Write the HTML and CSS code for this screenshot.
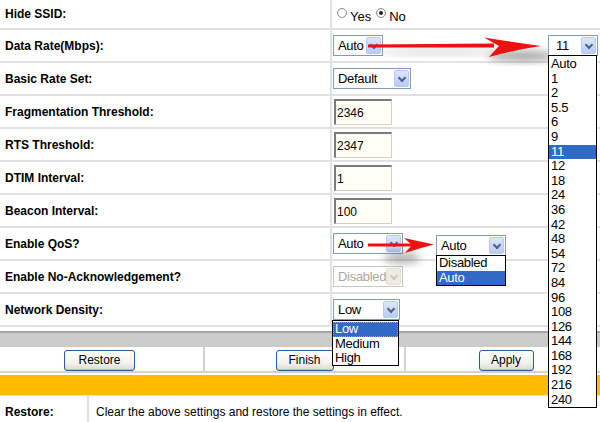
FILE: index.html
```html
<!DOCTYPE html>
<html>
<head>
<meta charset="utf-8">
<link rel="stylesheet" href="styles.css">
</head>
<body>
<div class="page">
  <div class="form">
    <div class="row first">
      <div class="label">Hide SSID:</div>
      <div class="value radios">
        <span class="radio"></span><span class="rtext">Yes</span>
        <span class="radio on"></span><span class="rtext">No</span>
      </div>
    </div>
    <div class="row">
      <div class="label">Data Rate(Mbps):</div>
      <div class="value"><div class="sel w50"><span>Auto</span><i class="dd"></i></div></div>
    </div>
    <div class="row">
      <div class="label">Basic Rate Set:</div>
      <div class="value"><div class="sel w78"><span>Default</span><i class="dd"></i></div></div>
    </div>
    <div class="row">
      <div class="label">Fragmentation Threshold:</div>
      <div class="value"><div class="inp">2346</div></div>
    </div>
    <div class="row">
      <div class="label">RTS Threshold:</div>
      <div class="value"><div class="inp">2347</div></div>
    </div>
    <div class="row">
      <div class="label">DTIM Interval:</div>
      <div class="value"><div class="inp">1</div></div>
    </div>
    <div class="row">
      <div class="label">Beacon Interval:</div>
      <div class="value"><div class="inp">100</div></div>
    </div>
    <div class="row">
      <div class="label">Enable QoS?</div>
      <div class="value"><div class="sel w70"><span>Auto</span><i class="dd"></i></div></div>
    </div>
    <div class="row">
      <div class="label">Enable No-Acknowledgement?</div>
      <div class="value"><div class="sel w70 disabled"><span>Disabled</span><i class="dd"></i></div></div>
    </div>
    <div class="row">
      <div class="label">Network Density:</div>
      <div class="value"><div class="sel w67"><span>Low</span><i class="dd"></i></div></div>
    </div>
  </div>
  <div class="graybar"></div>
  <div class="buttons">
    <div class="bcell c1"><div class="btn b1">Restore</div></div>
    <div class="bcell c2"><div class="btn b2">Finish</div></div>
    <div class="bcell c3"><div class="btn b3">Apply</div></div>
  </div>
  <div class="orange"></div>
  <div class="help">
    <div class="hlabel">Restore:</div>
    <div class="htext">Clear the above settings and restore the settings in effect.</div>
  </div>

  <!-- overlays -->
  <svg class="arrows" width="600" height="422" viewBox="0 0 600 422">
    <defs>
      <filter id="blur" x="-50%" y="-50%" width="200%" height="200%"><feGaussianBlur stdDeviation="4"/></filter>
    </defs>
    <ellipse cx="522" cy="56" rx="34" ry="5" fill="#555" opacity="0.55" filter="url(#blur)"/>
    <ellipse cx="440" cy="52" rx="60" ry="3" fill="#888" opacity="0.35" filter="url(#blur)"/>
    <path d="M368,44.5 L494,43.5 L494,47.5 L368,47.5 Z" fill="#f01010"/>
    <path d="M484,37.5 Q512,42 541,46 Q514,50 489,57 L499,46 Z" fill="#f01010"/>
    <ellipse cx="402" cy="258" rx="18" ry="5" fill="#555" opacity="0.5" filter="url(#blur)"/>
    <path d="M368,243.5 L412,243.5 L412,246.5 L368,246.5 Z" fill="#f01010"/>
    <path d="M404,238 Q420,241.5 434,244.5 Q420,248 405,253 L412,245 Z" fill="#f01010"/>
  </svg>

  <div class="sel w50 ov-rate"><span>11</span><i class="dd"></i></div>
  <div class="list ov-ratelist">
    <div>Auto</div><div>1</div><div>2</div><div>5.5</div><div>6</div><div>9</div>
    <div class="hl">11</div><div>12</div><div>18</div><div>24</div><div>36</div><div>42</div>
    <div>48</div><div>54</div><div>72</div><div>84</div><div>96</div><div>108</div>
    <div>126</div><div>144</div><div>168</div><div>192</div><div>216</div><div>240</div>
  </div>

  <div class="sel w70 ov-qos"><span>Auto</span><i class="dd"></i></div>
  <div class="list ov-qoslist">
    <div>Disabled</div><div class="hl">Auto</div>
  </div>

  <div class="list ov-denslist">
    <div class="hl focus">Low</div><div>Medium</div><div>High</div>
  </div>
</div>
</body>
</html>
```

FILE: styles.css
```css
* { box-sizing: border-box; }
body {
  margin: 0;
  background: #fff;
  font-family: "Liberation Sans", Arial, sans-serif;
  color: #000;
}
.page {
  position: relative;
  width: 600px;
  height: 422px;
  overflow: hidden;
}
.row {
  display: flex;
  height: 33px;
  border-bottom: 2px solid #e1e1e1;
}
.row.first { height: 30px; }
.label {
  width: 332px;
  padding-left: 5px;
  border-right: 2px solid #e1e1e1;
  display: flex;
  align-items: center;
  font-weight: bold;
  font-size: 12px;
}
.value {
  flex: 1;
  display: flex;
  align-items: center;
  padding-left: 1px;
}
.radios {
  padding-left: 5px;
  padding-top: 4px;
  font-size: 13px;
}
.radio {
  width: 10px;
  height: 10px;
  border-radius: 50%;
  border: 1px solid #8d8d8d;
  background: radial-gradient(circle at 60% 60%, #fff 40%, #dcdcdc 100%);
  position: relative;
  margin-top: -6px;
}
.radio.on::after {
  content: "";
  position: absolute;
  left: 2px;
  top: 2px;
  width: 4px;
  height: 4px;
  border-radius: 50%;
  background: #222;
}
.rtext { margin-left: 3px; margin-right: 5px; }

.sel {
  position: relative;
  height: 21px;
  border: 1px solid #7f9db9;
  background: #fff;
  font-size: 13px;
  display: flex;
  align-items: center;
  padding-left: 4px;
  letter-spacing: -0.3px;
}
.w50 { width: 50px; }
.w78 { width: 78px; }
.w70 { width: 70px; }
.w67 { width: 67px; }
.dd {
  position: absolute;
  right: 1px;
  top: 1px;
  bottom: 1px;
  width: 15px;
  border-radius: 2px;
  background: linear-gradient(#dbe6fe, #b9ccf7);
  border: 1px solid #b6c9f2;
}
.dd::after {
  content: "";
  position: absolute;
  left: 4px;
  top: 4px;
  width: 4px;
  height: 4px;
  border-right: 2px solid #4d6185;
  border-bottom: 2px solid #4d6185;
  transform: rotate(45deg);
}
.sel.disabled {
  border-color: #c9c7ba;
  color: #aca899;
  background: #fff;
}
.sel.disabled .dd {
  background: #eeede5;
  border-color: #e3e1d6;
}
.sel.disabled .dd::after {
  border-color: #c9c7ba;
}
.inp {
  width: 58px;
  height: 26px;
  border-style: solid;
  border-width: 2px 1px 1px 2px;
  border-color: #7b7b7b #d4d0c8 #d4d0c8 #7b7b7b;
  background: #fffff7;
  font-size: 12px;
  padding: 5px 0 0 1px;
  margin-left: 1px;
}

.graybar {
  margin-top: 4px;
  height: 16px;
  background: #cbcbcb;
  border-top: 2px solid #a5a5a5;
}
.buttons {
  display: flex;
  height: 26px;
  border-bottom: 2px solid #d2d2d2;
}
.bcell {
  display: flex;
  justify-content: center;
  align-items: center;
  padding-top: 2px;
}
.c1 { width: 205px; border-right: 2px solid #d2d2d2; }
.c2 { width: 201px; border-right: 2px solid #d2d2d2; }
.c3 { flex: 1; }
.btn {
  height: 21px;
  border: 1px solid #2c5aa0;
  border-radius: 3px;
  background: linear-gradient(#ffffff, #f4f3ee 60%, #dcdad0);
  font-size: 12px;
  display: flex;
  align-items: center;
  justify-content: center;
  box-shadow: inset 0 -1px 0 #c5c2b2;
}
.b1 { width: 71px; margin-left: -4px; }
.b2 { width: 58px; }
.b3 { width: 55px; margin-left: 6px; }
.orange {
  margin-top: 2px;
  height: 21px;
  background: #ffbc00;
  border-bottom: 1px solid #e9e3cf;
}
.help {
  display: flex;
  height: 30px;
}
.hlabel {
  width: 89px;
  border-right: 2px solid #dedede;
  padding: 9px 0 0 5px;
  font-size: 12px;
  font-weight: bold;
}
.htext {
  padding: 9px 0 0 7px;
  font-size: 12px;
}

.arrows {
  position: absolute;
  left: 0;
  top: 0;
}
.ov-rate {
  position: absolute;
  left: 548px;
  top: 35px;
  width: 50px;
  height: 21px;
  padding-left: 7px;
}
.list {
  position: absolute;
  background: #fff;
  border: 1px solid #000;
  font-size: 13px;
  line-height: 14.6px;
  letter-spacing: -0.3px;
}
.list div { padding-left: 2px; }
.list .hl { background: #316ac5; color: #fff; }
.list .focus { outline: 1px dotted #a0a0a0; outline-offset: -1px; }
.ov-ratelist {
  left: 548px;
  top: 55px;
  width: 49px;
  height: 353px;
  padding-top: 1px;
}
.ov-qos {
  position: absolute;
  left: 436px;
  top: 235px;
  width: 70px;
  height: 21px;
}
.ov-qoslist {
  left: 436px;
  top: 255px;
  width: 70px;
  height: 31px;
}
.ov-denslist {
  left: 332px;
  top: 320px;
  width: 67px;
  height: 46px;
  padding-top: 1px;
}
```
